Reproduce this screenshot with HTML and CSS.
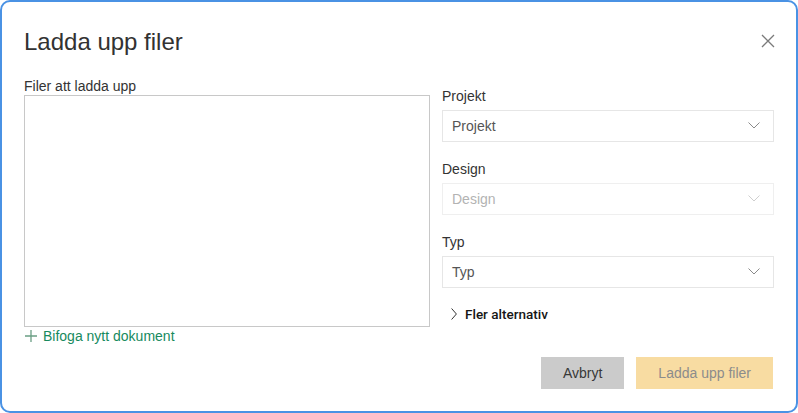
FILE: index.html
```html
<!DOCTYPE html>
<html lang="sv">
<head>
    <meta charset="UTF-8">
    <meta name="viewport" content="width=device-width, initial-scale=1.0">
    <title>Ladda upp filer</title>
    <link rel="stylesheet" href="styles.css">
</head>
<body>
    <div class="dialog">
        <div class="dialog-header">
            <h2>Ladda upp filer</h2>
            <button class="close-btn" aria-label="Stäng">
                <svg width="14" height="14" viewBox="0 0 14 14">
                    <path d="M1 1 L13 13 M13 1 L1 13" stroke="#7a7a7a" stroke-width="1.3" fill="none"/>
                </svg>
            </button>
        </div>

        <div class="dialog-body">
            <div class="files-col">
                <label class="field-label">Filer att ladda upp</label>
                <div class="drop-zone"></div>
                <a class="add-link" href="#">
                    <svg width="12" height="12" viewBox="0 0 12 12">
                        <path d="M6 0 V12 M0 6 H12" stroke="#6a9e84" stroke-width="1.3" fill="none"/>
                    </svg>
                    Bifoga nytt dokument
                </a>
            </div>

            <div class="fields-col">
                <div class="field">
                    <label class="field-label">Projekt</label>
                    <div class="select">
                        <span>Projekt</span>
                        <svg class="chevron" width="12" height="7" viewBox="0 0 12 7">
                            <path d="M0.5 0.5 L6 6 L11.5 0.5" stroke="#8a8a8a" stroke-width="1" fill="none"/>
                        </svg>
                    </div>
                </div>

                <div class="field">
                    <label class="field-label">Design</label>
                    <div class="select disabled">
                        <span>Design</span>
                        <svg class="chevron" width="12" height="7" viewBox="0 0 12 7">
                            <path d="M0.5 0.5 L6 6 L11.5 0.5" stroke="#cfcfcf" stroke-width="1" fill="none"/>
                        </svg>
                    </div>
                </div>

                <div class="field">
                    <label class="field-label">Typ</label>
                    <div class="select">
                        <span>Typ</span>
                        <svg class="chevron" width="12" height="7" viewBox="0 0 12 7">
                            <path d="M0.5 0.5 L6 6 L11.5 0.5" stroke="#8a8a8a" stroke-width="1" fill="none"/>
                        </svg>
                    </div>
                </div>

                <div class="more-options">
                    <svg width="6" height="12" viewBox="0 0 6 12">
                        <path d="M0.6 0.5 L5.4 6 L0.6 11.5" stroke="#333" stroke-width="1" fill="none"/>
                    </svg>
                    <span>Fler alternativ</span>
                </div>
            </div>
        </div>

        <div class="dialog-footer">
            <button class="btn btn-cancel">Avbryt</button>
            <button class="btn btn-upload" disabled>Ladda upp filer</button>
        </div>
    </div>
</body>
</html>
```

FILE: styles.css
```css
* {
    margin: 0;
    padding: 0;
    box-sizing: border-box;
}

body {
    font-family: 'Liberation Sans', Arial, sans-serif;
    background: #fff;
    color: #333;
}

.dialog {
    width: 798px;
    height: 413px;
    border: 2px solid #4a92e4;
    border-radius: 10px;
    padding: 26px 23px 22px 22px;
    display: flex;
    flex-direction: column;
}

.dialog-header {
    display: flex;
    justify-content: space-between;
    align-items: center;
    height: 28px;
}

.dialog-header h2 {
    font-size: 24px;
    line-height: 28px;
    font-weight: 400;
    color: #323232;
}

.close-btn {
    background: none;
    border: none;
    display: flex;
    margin-right: -2px;
    margin-top: -3px;
    cursor: pointer;
}

.dialog-body {
    display: grid;
    grid-template-columns: 406px 332px;
    column-gap: 12px;
    margin-top: 21px;
}

.field-label {
    display: block;
    font-size: 14px;
    line-height: 18px;
    color: #333;
}

.drop-zone {
    height: 232px;
    border: 1px solid #c8c8c8;
}

.add-link {
    display: flex;
    align-items: center;
    gap: 6px;
    font-size: 14px;
    line-height: 18px;
    color: #178a5e;
    text-decoration: none;
    padding-left: 1px;
}

.add-link svg {
    margin-top: -1px;
}

.fields-col {
    padding-top: 10px;
}

.field {
    margin-bottom: 18px;
}

.field .field-label {
    margin-bottom: 5px;
}

.select {
    height: 32px;
    border: 1px solid #e6e6e6;
    display: flex;
    align-items: center;
    justify-content: space-between;
    padding: 0 13px 0 9px;
    font-size: 14px;
    line-height: 18px;
    color: #555;
}

.select.disabled {
    color: #b3b3b3;
    border-color: #efefef;
}

.chevron {
    margin-top: -1px;
}

.more-options {
    display: flex;
    align-items: center;
    gap: 8px;
    padding-left: 9px;
    margin-top: -1px;
    font-family: Roboto, 'Liberation Sans', sans-serif;
    font-size: 13.5px;
    line-height: 18px;
    font-weight: 500;
    color: #161616;
}

.dialog-footer {
    margin-top: auto;
    display: flex;
    justify-content: flex-end;
    gap: 12px;
}

.btn {
    height: 32px;
    padding: 0 22px;
    border: none;
    font-family: inherit;
    font-size: 14px;
    cursor: pointer;
}

.btn-cancel {
    background: #cbcbcb;
    color: #383838;
}

.btn-upload {
    background: #f8dca2;
    color: #8c8c8c;
    cursor: default;
}
```
